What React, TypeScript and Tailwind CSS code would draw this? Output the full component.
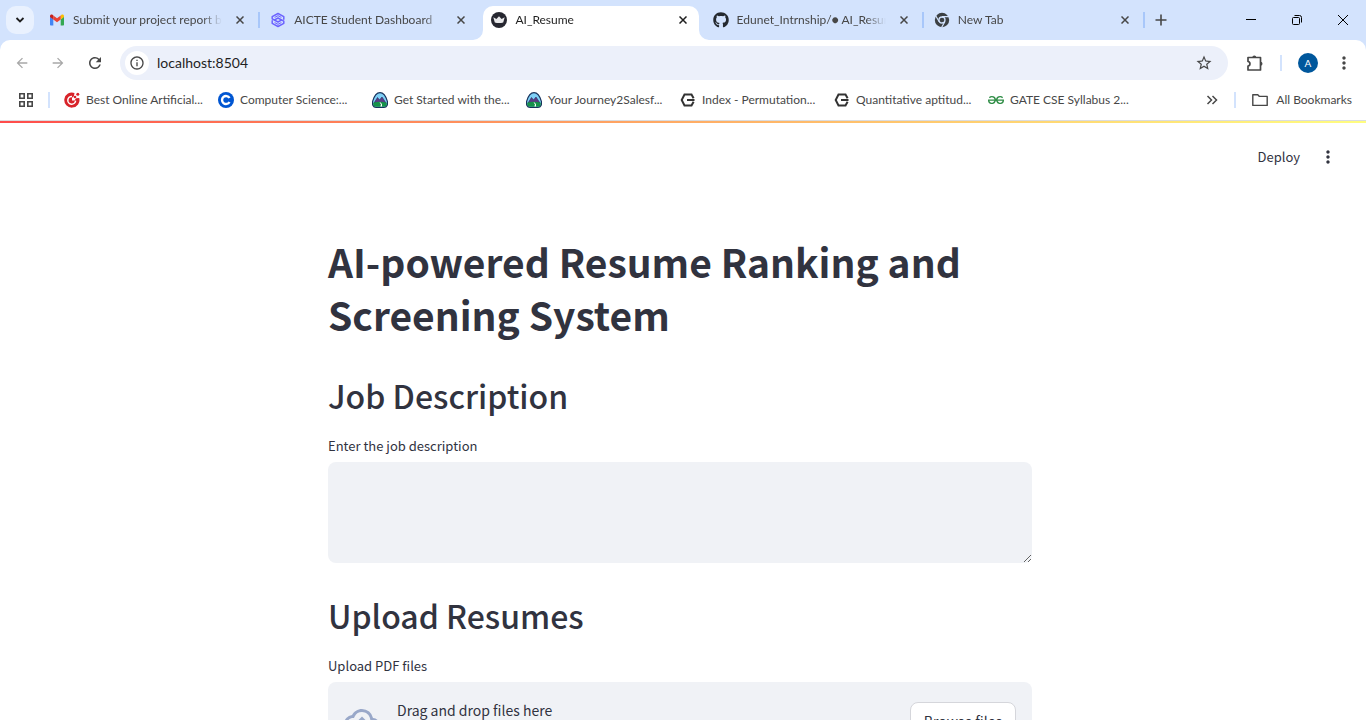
import React from "react";
import {
  MdArrowBack, MdArrowForward, MdRefresh, MdInfoOutline, MdStarBorder,
  MdMoreVert, MdOutlineCloudUpload,
} from "react-icons/md";
import { FaGithub } from "react-icons/fa";
import { SiGeeksforgeeks } from "react-icons/si";

const GmailIcon = () => (
  <svg viewBox="0 0 16 16" className="size-4">
    <path d="M1 4.500v8c0 .6.500 1 1 1h2.300V7.400z" fill="#4285f4" />
    <path d="M11.700 13.500H14c.6 0 1-.4 1-1v-8l-3.300 2.900z" fill="#34a853" />
    <path d="M11.700 3.600v3.800L15 4.900V4c0-1.400-1.500-2-2.500-1.200z" fill="#fbbc04" />
    <path d="M4.300 7.400V3.400L8 6.200l3.700-2.800v4L8 10.200z" fill="#ea4335" />
    <path d="M1 4v.9l3.300 2.500V3.400l-.8-.6C2.500 2 1 2.600 1 4z" fill="#c5221f" />
  </svg>
);

const DashboardIcon = () => (
  <svg viewBox="0 0 16 16" className="size-4" fill="none" stroke="#6c63ff" strokeWidth="1.500" strokeLinejoin="round" strokeLinecap="round">
    <path d="M13.800 7.200V4.700L8 1.500 2.200 4.700v2.100L8 10l3.400-1.900" />
    <path d="M2.200 8.800v2.500L8 14.500l5.800-3.200V9.200L8 6 4.600 7.900" />
    <path d="M5 5.200 8 3.700l3 1.500M5 10.800l3 1.500 3-1.500" strokeWidth="1" />
  </svg>
);

const CrownIcon = () => (
  <svg viewBox="0 0 16 16" className="size-4">
    <circle cx="8" cy="8" r="8" fill="#262730" />
    <path d="M2.300 5.300 5.400 7 8 4.300 10.600 7l3.100-1.700-1.500 5.200c-2.600.8-5.800.8-8.400 0z" fill="#e8e8ea" />
  </svg>
);

const ChromeIcon = () => (
  <svg viewBox="0 0 16 16" className="size-4">
    <circle cx="8" cy="8" r="7.200" fill="#3c4043" />
    <circle cx="8" cy="8" r="3" fill="none" stroke="#d3e3fd" strokeWidth="1.300" />
    <path d="M8 4.700h7M5.200 9.700 1.700 3.800M10.800 9.700l-3.400 6" stroke="#d3e3fd" strokeWidth="1.200" />
  </svg>
);

const RedIcon = () => (
  <svg viewBox="0 0 16 16" className="size-4">
    <path d="M10.500.9A7.600 7.600 0 1 0 15.200 6l-3.100.2-2.200-2z" fill="#d8232a" />
    <path d="M11.600 8.600A3.900 3.900 0 1 1 8 4.400" fill="none" stroke="#fff" strokeWidth="1.500" />
    <path d="M8 8.500V5.800l2.200-1.900 1.900 2L10.600 8.500z" fill="#fff" />
    <circle cx="11" cy="5" r="1.300" fill="#d8232a" />
    <circle cx="13.800" cy="2.200" r="1.500" fill="#d8232a" />
  </svg>
);

const BlueIcon = () => (
  <svg viewBox="0 0 16 16" className="size-4">
    <circle cx="8" cy="8" r="8" fill="#0056d2" />
    <path d="M11.500 6A4 4 0 1 0 11.500 10" fill="none" stroke="#fff" strokeWidth="2.400" />
  </svg>
);

const TrailIcon = () => (
  <svg viewBox="0 0 16 16" className="size-4">
    <path d="M8 .7c4 0 6 4 7.300 8.500.8 3-.3 6.100-3.300 6.100H4C1 15.300-.1 12.200.7 9.200 2 4.700 4 .7 8 .7z" fill="#7fd0f7" stroke="#17325c" strokeWidth="1.200" />
    <path d="M2 11 5.500 5.500 7.500 8 10 5l4 6z" fill="#5a3c86" stroke="#2c2a5c" strokeWidth=".6" />
    <path d="M1.200 10.700c4-1.400 9.500-1.400 13.600 0 .3 2.500-.8 4-2.800 4H4c-2 0-3.100-1.500-2.800-4z" fill="#16924a" />
    <path d="m7.500 10.500 1.500 1.700-.6 2.300h1.700l-.2-2.500-1.300-1.500z" fill="#fff" />
  </svg>
);

const HexIcon = () => (
  <svg viewBox="0 0 16 16" className="size-4" fill="none" stroke="#333" strokeWidth="2">
    <path d="M13.600 6.300 11.500 2.500h-7L1.700 8l2.800 5.500h7l2.100-3.800M7 8h7.500" />
  </svg>
);

const FolderIcon = () => (
  <svg viewBox="0 0 16 16" className="size-4" fill="none" stroke="#474747" strokeWidth="1.400" strokeLinejoin="round">
    <path d="M.8 2.700h5l1.600 1.700h7.800v9H.8z" />
  </svg>
);

const ExtensionIcon = () => (
  <svg viewBox="0 0 18 18" className="size-[18px]">
    <path d="M2 3.500h12.500v12.500H2v-4c2.600-.3 2.600-4.200 0-4.500z" fill="none" stroke="#474747" strokeWidth="1.700" strokeLinejoin="round" />
    <path d="M6.300 3.500a2 2 0 0 1 4 0zM14.500 7.700a2 2 0 0 1 0 4z" fill="#474747" />
  </svg>
);

const CloseIcon = () => (
  <svg viewBox="0 0 8 8" className="size-2" fill="none" stroke="currentColor" strokeWidth="1.500">
    <path d="m.5.5 7 7M7.500.5l-7 7" />
  </svg>
);

const tabs = [
  { title: "Submit your project report by", icon: <GmailIcon />, divider: true },
  { title: "AICTE Student Dashboard", icon: <DashboardIcon />, divider: false },
  { title: "AI_Resume", icon: <CrownIcon />, active: true, divider: false },
  { title: "Edunet_Intrnship/● AI_Resume", icon: <FaGithub className="size-4 text-[#24292f]" />, divider: true },
  { title: "New Tab", icon: <ChromeIcon />, divider: true },
];

const bookmarks = [
  { title: "Best Online Artificial...", icon: <RedIcon /> },
  { title: "Computer Science:...", icon: <BlueIcon /> },
  { title: "Get Started with the...", icon: <TrailIcon /> },
  { title: "Your Journey2Salesf...", icon: <TrailIcon /> },
  { title: "Index - Permutation...", icon: <HexIcon /> },
  { title: "Quantitative aptitud...", icon: <HexIcon /> },
  { title: "GATE CSE Syllabus 2...", icon: <SiGeeksforgeeks className="size-4 text-[#2f8d46]" /> },
];

function TabStrip() {
  return (
    <div className="flex h-10 bg-[#d3e3fd]">
      <button aria-label="Search tabs" className="ml-1.5 mt-1.5 flex size-7 shrink-0 items-center justify-center rounded-[10px] bg-[#e9f1fe]">
        <svg viewBox="0 0 10 10" className="size-2.5" fill="none" stroke="#1f1f1f" strokeWidth="1.800"><path d="m1.500 3 3.500 3.500L8.500 3" /></svg>
      </button>
      <div className="ml-[7px] flex min-w-0 flex-1">
        {tabs.map((tab) => (
          <div key={tab.title} className="flex min-w-0 flex-1 items-end">
            <div
              className={
                tab.active
                  ? "relative mr-1.5 flex h-[34px] min-w-0 flex-1 items-center rounded-t-[10px] bg-white pb-1.5 pl-2 text-[#1f1f1f]"
                  : "mr-1.5 flex h-[34px] min-w-0 flex-1 items-center pb-1.5 pl-2 text-[#474747]"
              }
            >
              {tab.active && (
                <>
                  <svg viewBox="0 0 10 10" className="absolute bottom-0 right-full size-2.5"><path d="M10 0v10H0A10 10 0 0 0 10 0z" fill="#fff" /></svg>
                  <svg viewBox="0 0 10 10" className="absolute bottom-0 left-full size-2.5"><path d="M0 0v10h10A10 10 0 0 1 0 0z" fill="#fff" /></svg>
                </>
              )}
              <span className="shrink-0">{tab.icon}</span>
              <span className="ml-2 min-w-0 flex-1 overflow-hidden whitespace-nowrap text-xs [mask-image:linear-gradient(to_left,transparent,black_20px)]">{tab.title}</span>
              <button aria-label={`Close ${tab.title}`} className="ml-2.5 mr-2 flex size-4 shrink-0 items-center justify-center">
                <CloseIcon />
              </button>
            </div>
            <span className={tab.divider ? "-ml-1 mb-3 mr-0.5 h-4 w-0.5 bg-[#a8c7fa]" : "-ml-1 mr-0.5 w-0.5"} />
          </div>
        ))}
      </div>
      <button aria-label="New tab" className="flex w-7 items-center justify-center text-[#474747]">
        <svg viewBox="0 0 12 12" className="size-3" stroke="currentColor" strokeWidth="1.600"><path d="M6 .5v11M.5 6h11" /></svg>
      </button>
      <div className="ml-[53px] flex">
        <button aria-label="Minimize" className="flex w-[46px] items-center justify-center"><svg viewBox="0 0 12 12" className="size-3"><path d="M1 5.500h10" stroke="#000" /></svg></button>
        <button aria-label="Restore" className="flex w-[46px] items-center justify-center"><svg viewBox="0 0 12 12" className="size-3" fill="none" stroke="#000"><rect x="1.500" y="3.500" width="7" height="7" rx="1" /><path d="M3.500 1.500h5a2 2 0 0 1 2 2v5" /></svg></button>
        <button aria-label="Close window" className="flex w-[46px] items-center justify-center"><svg viewBox="0 0 12 12" className="size-3"><path d="m1 1 10 10M11 1 1 11" stroke="#000" /></svg></button>
      </div>
    </div>
  );
}

function Toolbar() {
  return (
    <div className="bg-[#d3e3fd]">
      <div className="flex h-[46px] items-center rounded-t-[10px] bg-white pr-3 text-[#474747]">
        <div className="flex w-[120px] shrink-0 items-center gap-5 pl-[14px]">
          <button aria-label="Back" className="text-[#a8a8a8]"><MdArrowBack className="size-4" /></button>
          <button aria-label="Forward" className="text-[#a8a8a8]"><MdArrowForward className="size-4" /></button>
          <button aria-label="Reload"><MdRefresh className="size-[18px]" /></button>
        </div>
        <div className="flex h-[34px] min-w-0 flex-1 items-center rounded-full bg-[#ecf0fa] pl-[5px] pr-[15px]">
          <button aria-label="View site information" className="flex size-6 items-center justify-center rounded-full bg-white"><MdInfoOutline className="size-4" /></button>
          <input aria-label="Address" defaultValue="localhost:8504" className="ml-2 min-w-0 flex-1 bg-transparent text-sm text-[#1f1f1f] outline-none" />
          <button aria-label="Bookmark this tab"><MdStarBorder className="size-[18px]" /></button>
        </div>
        <button aria-label="Extensions" className="ml-[18px]"><ExtensionIcon /></button>
        <span className="ml-4 h-4 w-0.5 bg-[#d3e3fd]" />
        <button aria-label="Profile" className="ml-4 flex size-5 items-center justify-center rounded-full bg-[#00579c] text-[10px] text-white">A</button>
        <button aria-label="Browser menu" className="ml-4"><MdMoreVert className="size-5" /></button>
      </div>
    </div>
  );
}

function BookmarksBar() {
  return (
    <div className="flex h-[35px] items-center border-b border-[#dadce0] bg-white pb-[6px] pl-[18px] pr-3.5 text-xs text-[#474747]">
      <button aria-label="Apps"><svg viewBox="0 0 16 16" className="size-4" fill="none" stroke="#474747" strokeWidth="1.600"><path d="M1.800 1.800h4.400v4.400H1.800zM9.800 1.800h4.400v4.400H9.800zM1.800 9.800h4.400v4.400H1.800zM9.800 9.800h4.400v4.400H9.800z" /></svg></button>
      <span className="ml-3.5 h-4 w-0.5 shrink-0 bg-[#d3e3fd]" />
      <nav className="ml-3.5 flex min-w-0 flex-1">
        {bookmarks.map((b) => (
          <a key={b.title} href="#" className="flex w-[154px] shrink-0 items-center gap-1.5 whitespace-nowrap">
            {b.icon}
            <span>{b.title}</span>
          </a>
        ))}
      </nav>
      <button aria-label="More bookmarks"><svg viewBox="0 0 12 12" className="size-3" fill="none" stroke="#474747" strokeWidth="1.500"><path d="m1.500 2 4 4-4 4M6.500 2l4 4-4 4" /></svg></button>
      <span className="ml-4 h-4 w-0.5 bg-[#d3e3fd]" />
      <a href="#" className="ml-4 flex items-center gap-2"><FolderIcon /><span>All Bookmarks</span></a>
    </div>
  );
}

export default function App() {
  return (
    <div className="flex h-screen flex-col overflow-hidden bg-white">
      <header className="shrink-0 font-['Lato','Open_Sans',sans-serif]">
        <TabStrip />
        <Toolbar />
        <BookmarksBar />
      </header>
      <div className="h-0.5 shrink-0 bg-linear-to-r from-[#ff4b4b] to-[#fffd80]" />
      <div className="min-h-0 flex-1 overflow-hidden font-['Noto_Sans_CJK_SC',sans-serif] text-[#31333f]">
        <div className="flex h-[68px] items-center justify-end pr-7">
          <button className="text-[13px] leading-5">Deploy</button>
          <button aria-label="Main menu" className="ml-[18px]"><MdMoreVert className="size-5" /></button>
        </div>
        <main className="pr-1.5">
          <div className="mx-auto flex max-w-[736px] flex-col px-4 pt-11">
            <h1 className="text-[39px] font-bold leading-[53px]">AI-powered Resume Ranking and Screening System</h1>
            <h2 className="mt-[33px] text-[32px] font-medium leading-[43px]">Job Description</h2>
            <label htmlFor="job" className="mt-[19px] text-[13px] leading-5">Enter the job description</label>
            <textarea id="job" className="mt-1.5 h-[101px] w-full rounded-lg bg-[#f0f2f6] p-4 outline-none" />
            <h2 className="mt-[31px] text-[32px] font-medium leading-[43px]">Upload Resumes</h2>
            <p className="mt-[19px] text-[13px] leading-5">Upload PDF files</p>
            <section className="mt-1.5 flex h-[77px] shrink-0 items-center rounded-lg bg-[#f0f2f6] px-4">
              <MdOutlineCloudUpload className="size-9 text-[#99a8c9]" />
              <span className="ml-[17px] flex-1 self-start pt-4 text-sm leading-6">Drag and drop files here</span>
              <button className="h-[38px] rounded-lg border border-[#d5d6db] bg-white px-[13px] text-sm">Browse files</button>
            </section>
          </div>
        </main>
      </div>
    </div>
  );
}
